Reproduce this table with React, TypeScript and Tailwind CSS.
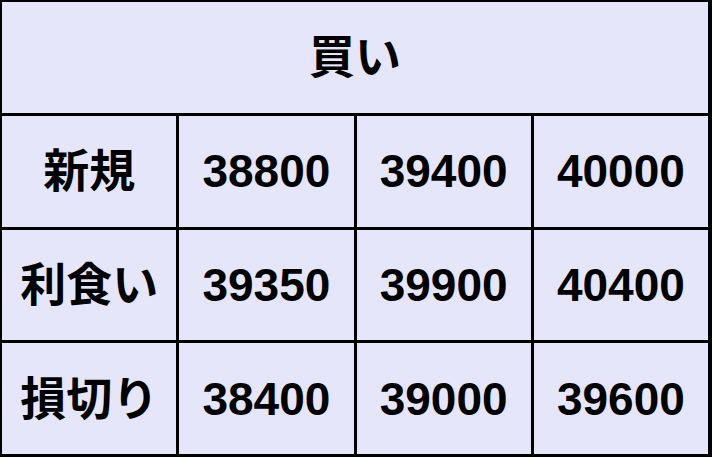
import React from "react";

const rows: { label: string; values: string[] }[] = [
  { label: "新規", values: ["38800", "39400", "40000"] },
  { label: "利食い", values: ["39350", "39900", "40400"] },
  { label: "損切り", values: ["38400", "39000", "39600"] },
];

export default function App() {
  return (
    <div
      className="w-[712px] h-[457px] bg-black pt-[2px] pl-[2px] pr-[4px] pb-[3px] grid grid-cols-4 grid-rows-4 gap-[3px] text-black font-bold text-[46px]"
      style={{ fontFamily: '"Liberation Sans", "Noto Sans CJK JP", sans-serif' }}
    >
      <div className="col-span-4 bg-[#e6e6fa] flex items-center justify-center leading-none">
        買い
      </div>
      {rows.map((r) => (
        <React.Fragment key={r.label}>
          <div className="bg-[#e6e6fa] flex items-center justify-center leading-none">
            {r.label}
          </div>
          {r.values.map((v, i) => (
            <div
              key={i}
              className="bg-[#e6e6fa] flex items-center justify-center leading-none"
            >
              {v}
            </div>
          ))}
        </React.Fragment>
      ))}
    </div>
  );
}
